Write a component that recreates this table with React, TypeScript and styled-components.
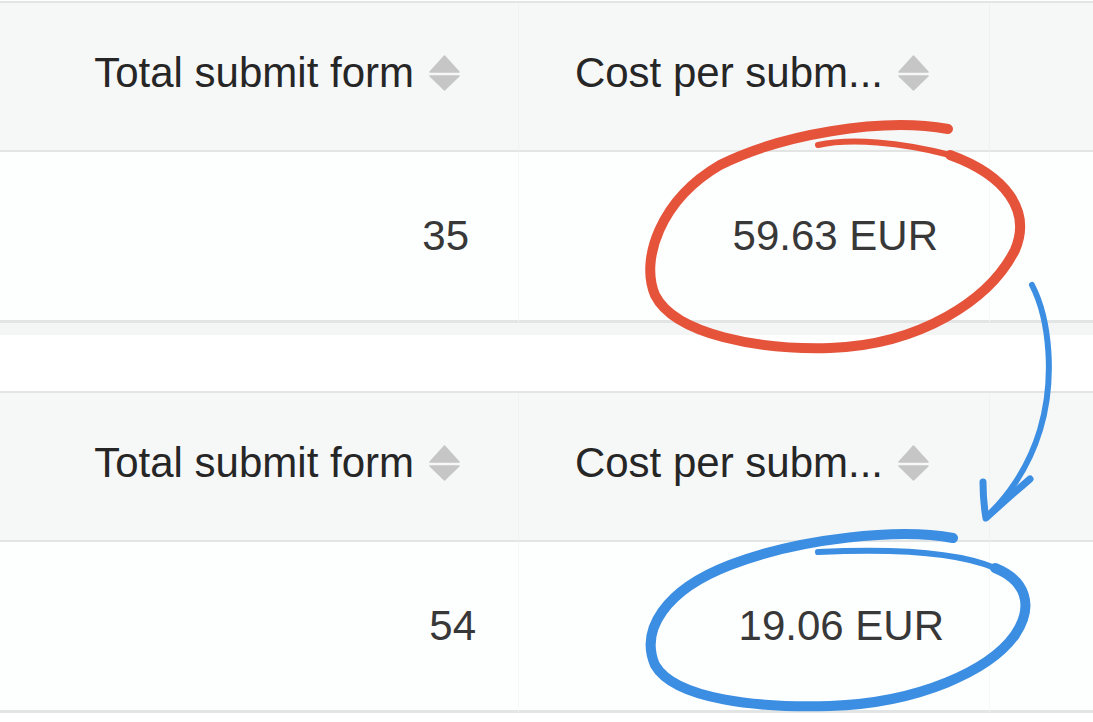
import React from "react";
import styled, { createGlobalStyle } from "styled-components";

const Global = createGlobalStyle`
  html, body { margin: 0; padding: 0; background: #ffffff; }
  body { font-family: "Liberation Sans", Arial, sans-serif; }
`;

const Page = styled.div`
  position: relative;
  width: 1093px;
  height: 722px;
  overflow: hidden;
  background: #ffffff;
  padding-top: 1px;
  box-sizing: border-box;
`;

const Table = styled.div`
  display: grid;
  grid-template-columns: 519px 471px 1fr;
  border-top: 2px solid #e3e4e4;
`;

const HeaderCell = styled.div<{ $pad: number; $last?: boolean }>`
  height: 149px;
  display: flex;
  align-items: center;
  justify-content: flex-end;
  gap: 15px;
  padding: 0 ${(p) => p.$pad}px 8px 0;
  box-sizing: border-box;
  background: #f6f7f7;
  border-bottom: 2px solid #e3e4e4;
  border-right: ${(p) => (p.$last ? "none" : "1px solid #f0f1f1")};
  font-size: 42px;
  line-height: 1;
  color: #262626;
  white-space: nowrap;
`;

const BodyCell = styled.div<{ $pad: number; $last?: boolean }>`
  height: 171px;
  display: flex;
  align-items: center;
  justify-content: flex-end;
  padding-right: ${(p) => p.$pad}px;
  box-sizing: border-box;
  background: #fdfefe;
  border-bottom: 3px solid #e3e4e4;
  border-right: ${(p) => (p.$last ? "none" : "1px solid #f6f7f7")};
  font-size: 42px;
  line-height: 1;
  color: #383838;
`;

const Strip = styled.div`
  height: 12px;
  background: #f4f5f5;
`;

const Spacer = styled.div`
  height: 56px;
  background: #ffffff;
`;

const Overlay = styled.svg`
  position: absolute;
  left: 0;
  top: 0;
  pointer-events: none;
`;

const SortIcon = () => (
  <svg width="31" height="36" viewBox="0 0 31 36">
    <path d="M15.5 1 L30 17 L1 17 Z" fill="#c6c6c6" stroke="#c6c6c6" strokeWidth="1.5" strokeLinejoin="round" />
    <path d="M1 21 L30 21 L15.5 35 Z" fill="#c6c6c6" stroke="#c6c6c6" strokeWidth="1.5" strokeLinejoin="round" />
  </svg>
);

type Row = { total: string; cost: string };

const DataTable = ({ row, inset }: { row: Row; inset: [number, number] }) => (
  <Table>
    <HeaderCell $pad={58}>
      Total submit form
      <SortIcon />
    </HeaderCell>
    <HeaderCell $pad={60}>
      Cost per subm...
      <SortIcon />
    </HeaderCell>
    <HeaderCell $pad={0} $last />
    <BodyCell $pad={inset[0]}>{row.total}</BodyCell>
    <BodyCell $pad={inset[1]}>{row.cost}</BodyCell>
    <BodyCell $pad={0} $last />
  </Table>
);

export default function App() {
  return (
    <>
      <Global />
      <Page>
        <DataTable row={{ total: "35", cost: "59.63 EUR" }} inset={[49, 51]} />
        <Strip />
        <Spacer />
        <DataTable row={{ total: "54", cost: "19.06 EUR" }} inset={[42, 45]} />
        <Overlay width="1093" height="722" viewBox="0 0 1093 722">
          <g fill="none" strokeLinecap="round" strokeLinejoin="round">
            <path
              d="M 948 129 C 880 117, 780 135, 720 165 C 660 200, 640 260, 655 295 C 675 335, 760 350, 830 348 C 920 345, 990 300, 1015 250 C 1032 210, 1005 175, 950 155"
              stroke="#e5533b"
              strokeWidth="10"
            />
            <path d="M 950 155 C 900 142, 850 138, 818 145" stroke="#e5533b" strokeWidth="6" />
            <path
              d="M 953 538 C 900 528, 800 538, 730 565 C 665 590, 640 630, 655 665 C 675 700, 760 708, 830 706 C 920 703, 990 670, 1015 635 C 1035 605, 1025 580, 995 568"
              stroke="#3b8ee2"
              strokeWidth="10"
            />
            <path d="M 995 568 C 960 553, 900 548, 818 552" stroke="#3b8ee2" strokeWidth="6" />
            <path
              d="M 1032 285 C 1050 320, 1055 380, 1040 430 C 1028 470, 1005 500, 986 517"
              stroke="#3b8ee2"
              strokeWidth="6"
            />
            <path d="M 983 482 C 983 495, 984 507, 986 518 C 1000 505, 1015 492, 1030 479" stroke="#3b8ee2" strokeWidth="7" />
          </g>
        </Overlay>
      </Page>
    </>
  );
}
